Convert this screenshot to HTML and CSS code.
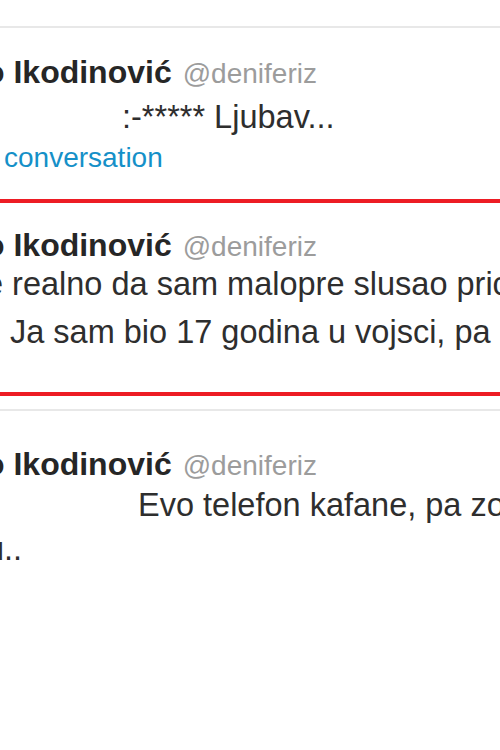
FILE: index.html
```html
<!DOCTYPE html>
<html>
<head>
<meta charset="utf-8">
<link rel="stylesheet" href="styles.css">
</head>
<body>
<div class="stream">
	<div class="stream-top"></div>

	<div class="tweet tweet-first">
		<div class="tweet-head">
			<span class="fullname">o Ikodinović</span>
			<span class="username">@deniferiz</span>
		</div>
		<div class="tweet-text">
			<span class="line line-ljubav">:-***** Ljubav...</span>
		</div>
		<a class="expand" href="#">conversation</a>
	</div>

	<div class="tweet tweet-marked">
		<div class="tweet-head">
			<span class="fullname">o Ikodinović</span>
			<span class="username">@deniferiz</span>
		</div>
		<div class="tweet-text">
			<span class="line line-realno">e realno da sam malopre slusao pric</span>
			<span class="line line-ja">Ja sam bio 17 godina u vojsci, pa</span>
		</div>
	</div>

	<div class="tweet tweet-last">
		<div class="tweet-head">
			<span class="fullname">o Ikodinović</span>
			<span class="username">@deniferiz</span>
		</div>
		<div class="tweet-text">
			<span class="line line-evo">Evo telefon kafane, pa zo</span>
			<span class="line line-u">u..</span>
		</div>
	</div>
</div>
</body>
</html>
```

FILE: styles.css
```css
html, body {
  margin: 0;
  padding: 0;
  background: #fff;
  overflow: hidden;
}
body {
  font-family: "Liberation Sans", Arial, sans-serif;
  color: #2e2e2e;
  width: 500px;
  height: 750px;
}
.stream-top {
  height: 26px;
  border-bottom: 2px solid #e8e8e8;
}
.tweet {
  white-space: nowrap;
}
.tweet-first {
  padding: 24px 0 23px;
}
/* red box drawn over the screenshot */
.tweet-marked {
  border-top: 4px solid #ed1c24;
  border-bottom: 4px solid #ed1c24;
  padding: 22px 0 36px;
}
.tweet-marked .tweet-text {
  line-height: 48px;
  margin-top: -7px;
}
.tweet-last {
  margin-top: 13px;
  border-top: 2px solid #e8e8e8;
  padding-top: 33px;
}
.tweet-last .tweet-text {
  line-height: 44px;
  margin-top: -3px;
}
.tweet-head {
  display: flex;
  align-items: baseline;
  gap: 11px;
  line-height: 40px;
  margin-left: -15px;
}
.fullname {
  font-weight: bold;
  font-size: 32px;
  color: #262626;
}
.username {
  font-size: 28px;
  color: #9c9c9c;
}
.tweet-text {
  font-size: 32.5px;
  line-height: 46px;
}
.line {
  display: block;
}
.line-ljubav {
  margin-left: 122px;
}
.line-realno {
  margin-left: -15px;
}
.line-ja {
  margin-left: 10px;
}
.line-evo {
  margin-left: 138px;
}
.line-u {
  margin-left: -14px;
}
.expand {
  display: block;
  margin-left: 4px;
  font-size: 28px;
  line-height: 36px;
  color: #1590c8;
  text-decoration: none;
}
```
